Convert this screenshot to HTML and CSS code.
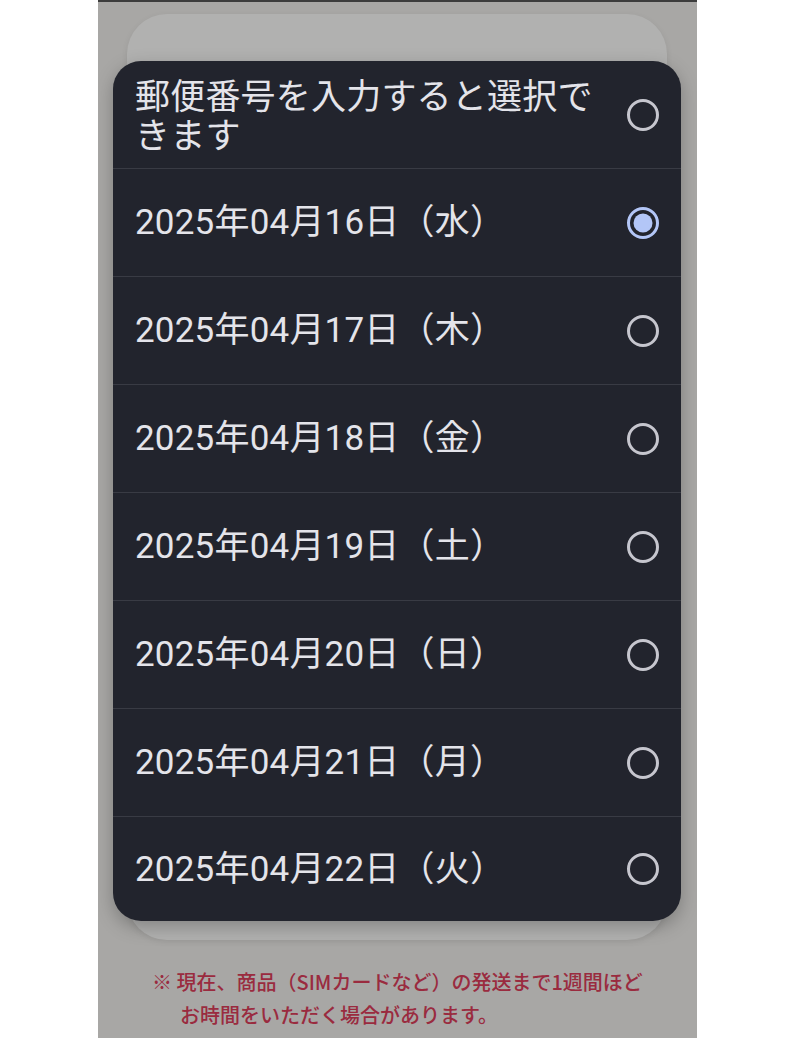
FILE: index.html
```html
<!DOCTYPE html>
<html lang="ja">
<head>
  <meta charset="UTF-8" />
  <meta name="viewport" content="width=device-width, initial-scale=1.0" />
  <title>配送希望日</title>
  <link rel="stylesheet" href="styles.css">
</head>
<body>
  <div class="screen">
    <div class="card"></div>

    <p class="notice">※ 現在、商品（SIMカードなど）の発送まで1週間ほどお時間をいただく場合があります。</p>

    <div class="dialog">
      <label class="option">
        <span class="option-text">郵便番号を入力すると選択できます</span>
        <svg class="radio" viewBox="0 0 34 34"><circle cx="17" cy="17" r="14.5" /></svg>
      </label>
      <label class="option selected">
        <span class="option-text">2025年04月16日（水）</span>
        <svg class="radio" viewBox="0 0 34 34"><circle cx="17" cy="17" r="14.5" /><circle class="dot" cx="17" cy="17" r="9.5" /></svg>
      </label>
      <label class="option">
        <span class="option-text">2025年04月17日（木）</span>
        <svg class="radio" viewBox="0 0 34 34"><circle cx="17" cy="17" r="14.5" /></svg>
      </label>
      <label class="option">
        <span class="option-text">2025年04月18日（金）</span>
        <svg class="radio" viewBox="0 0 34 34"><circle cx="17" cy="17" r="14.5" /></svg>
      </label>
      <label class="option">
        <span class="option-text">2025年04月19日（土）</span>
        <svg class="radio" viewBox="0 0 34 34"><circle cx="17" cy="17" r="14.5" /></svg>
      </label>
      <label class="option">
        <span class="option-text">2025年04月20日（日）</span>
        <svg class="radio" viewBox="0 0 34 34"><circle cx="17" cy="17" r="14.5" /></svg>
      </label>
      <label class="option">
        <span class="option-text">2025年04月21日（月）</span>
        <svg class="radio" viewBox="0 0 34 34"><circle cx="17" cy="17" r="14.5" /></svg>
      </label>
      <label class="option">
        <span class="option-text">2025年04月22日（火）</span>
        <svg class="radio" viewBox="0 0 34 34"><circle cx="17" cy="17" r="14.5" /></svg>
      </label>
    </div>
  </div>
</body>
</html>
```

FILE: styles.css
```css
body {
  margin: 0;
  background: #ffffff;
  font-family: Roboto, "Noto Sans CJK JP", sans-serif;
}
.screen {
  position: relative;
  width: 599px;
  height: 1036px;
  margin-left: 98px;
  background: #a8a7a5;
  border-top: 2px solid #3c3c3c;
  overflow: hidden;
}
.card {
  width: 540px;
  height: 926px;
  margin: 12px 0 0 29px;
  background: #b1b1b0;
  border-radius: 40px;
  box-shadow: 0 2px 6px rgba(0, 0, 0, 0.08);
}
.notice {
  margin: 25px 45px 0 82px;
  text-indent: -28px;
  font-family: "Noto Sans CJK JP", sans-serif;
  font-size: 20px;
  font-weight: 500;
  line-height: 33px;
  color: #9a2b3f;
}

/* date picker dialog on top of the page */
.dialog {
  position: absolute;
  top: 59px;
  left: 15px;
  width: 568px;
  background: #22242d;
  border-radius: 28px;
  box-shadow: 0 6px 18px rgba(0, 0, 0, 0.25);
  overflow: hidden;
}
.option {
  display: flex;
  align-items: center;
  justify-content: space-between;
  box-sizing: border-box;
  height: 108px;
  padding: 0 21px 0 22px;
  border-bottom: 1px solid #393b44;
  cursor: pointer;
}
.option:first-child .option-text {
  padding-top: 4px;
}
.option:last-child {
  height: 104px;
  border-bottom: none;
}
.option-text {
  max-width: 470px;
  font-size: 35px;
  letter-spacing: 0.2px;
  line-height: 39px;
  color: #e4e4ea;
}
.radio {
  flex-shrink: 0;
  width: 34px;
  height: 34px;
}
.radio circle {
  fill: none;
  stroke: #c6c6ce;
  stroke-width: 3;
}
.selected .radio circle {
  stroke: #b3c6f7;
}
.selected .radio .dot {
  fill: #b3c6f7;
  stroke: none;
}
```
